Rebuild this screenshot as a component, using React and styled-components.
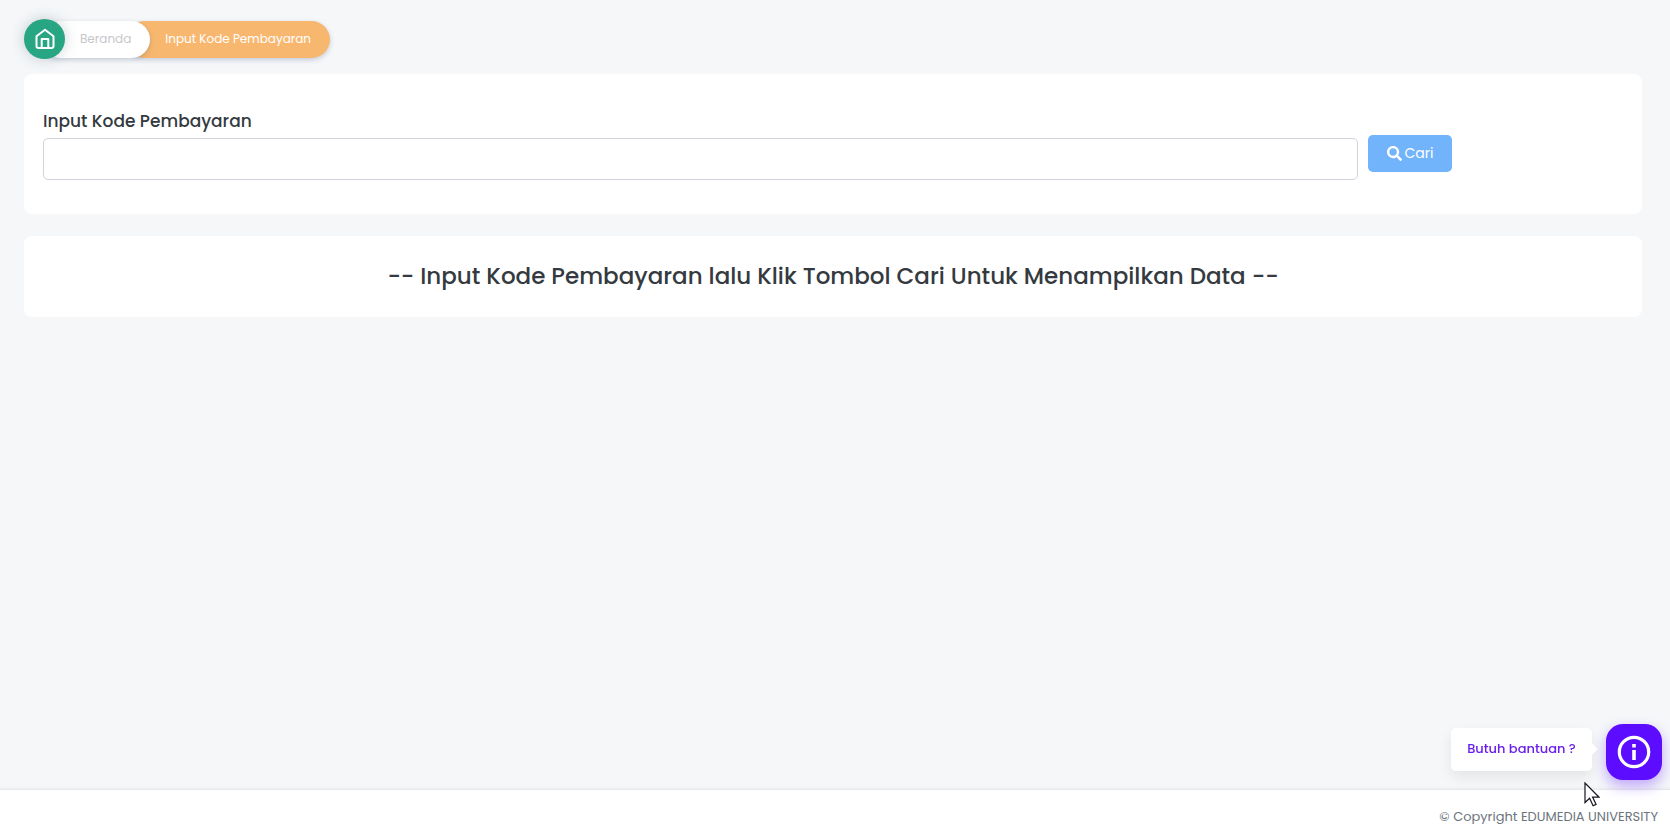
import React from 'react';
import styled, { createGlobalStyle } from 'styled-components';
import { FaSearch } from 'react-icons/fa';

const GlobalStyle = createGlobalStyle`
  *, *::before, *::after { box-sizing: border-box; }
  body {
    margin: 0;
    background: #f5f7f9;
    color: #343a40;
    font-family: Poppins, Inter, "Liberation Sans", sans-serif;
    font-size: 14px;
  }
`;

const Page = styled.div`
  display: flex;
  flex-direction: column;
  min-height: 100vh;
`;

const Main = styled.main`
  flex: 1;
  padding: 19px 28px 24px 24px;
`;

const Breadcrumb = styled.nav`
  display: flex;
  align-items: center;
  height: 40px;
  margin-bottom: 15px;
  isolation: isolate;
`;

const HomeLink = styled.a`
  z-index: 3;
  display: flex;
  align-items: center;
  justify-content: center;
  width: 41px;
  height: 40px;
  border-radius: 50%;
  background: #28a583;
  color: #fff;
  box-shadow: 0 0 14px rgba(50, 80, 90, 0.25);
`;

const Crumb = styled.a`
  z-index: ${(p) => p.$level};
  display: flex;
  align-items: center;
  height: 37px;
  margin-left: -24px;
  padding: 0 19px 0 39px;
  border-radius: 20px;
  background: ${(p) => (p.$active ? '#f8b76f' : '#fff')};
  color: ${(p) => (p.$active ? '#fff' : '#c6c8ca')};
  font-size: 12px;
  text-decoration: none;
  white-space: nowrap;
  box-shadow: 0 2px 5px rgba(60, 80, 120, 0.25);
`;

const Card = styled.section`
  margin-bottom: 22px;
  padding: ${(p) => p.$padding};
  border-radius: 8px;
  background: #fff;
`;

const SearchForm = styled.form`
  display: grid;
  grid-template-columns: minmax(0, 5fr) minmax(0, 1fr);
  column-gap: 2px;
`;

const Field = styled.div`
  display: flex;
  flex-direction: column;
`;

const Label = styled.label`
  margin-bottom: 4px;
  font-size: 17px;
  font-weight: 500;
  line-height: 26px;
`;

const TextInput = styled.input`
  width: 100%;
  height: 42px;
  padding: 8px 14px;
  border: 1px solid #ced4da;
  border-radius: 5px;
  background: #fff;
  color: inherit;
  font: inherit;
`;

const SearchButton = styled.button`
  display: flex;
  align-items: center;
  justify-content: center;
  gap: 3px;
  width: 84px;
  height: 37px;
  margin: 27px 0 0 8px;
  padding: 0 0 1px;
  border: 0;
  border-radius: 5px;
  background: #72b4fc;
  color: #fff;
  font: inherit;
`;

const Notice = styled.h1`
  margin: 0;
  font-size: 23px;
  font-weight: 500;
  line-height: 29px;
  text-align: center;
`;

const Footer = styled.footer`
  padding: 17px 12px 7px;
  border-top: 1px solid #e6eaec;
  background: #fff;
  color: #6c757d;
  font-size: 13px;
  line-height: 20px;
  text-align: right;
  box-shadow: 0 -1px 2px rgba(60, 80, 90, 0.06);
`;

const Help = styled.aside`
  position: fixed;
  right: 8px;
  bottom: 54px;
  display: flex;
  align-items: center;
  gap: 14px;
`;

const HelpText = styled.div`
  position: relative;
  margin-bottom: 5px;
  padding: 11px 14px 12px;
  width: 141px;
  border-radius: 5px;
  background: #fff;
  color: #6a1fee;
  font-size: 13px;
  font-weight: 500;
  line-height: 20px;
  text-align: center;
  white-space: nowrap;
  box-shadow: 0 6px 14px rgba(0, 0, 0, 0.08);

  &::after {
    content: '';
    position: absolute;
    top: 17px;
    right: -4px;
    width: 8px;
    height: 8px;
    background: #fff;
    transform: rotate(45deg);
  }
`;

const HelpButton = styled.button`
  display: flex;
  align-items: center;
  justify-content: center;
  width: 56px;
  height: 56px;
  padding: 0;
  border: 0;
  border-radius: 17px;
  background: #5c0cff;
  color: #fff;
  box-shadow: 0 6px 14px rgba(92, 12, 255, 0.35);
`;

const Pointer = styled.svg`
  position: fixed;
  right: 70px;
  bottom: 27px;
  pointer-events: none;
`;

function HomeIcon() {
  return (
    <svg width="20" height="22" viewBox="0 0 20 22" fill="none" stroke="currentColor" strokeWidth="2" strokeLinejoin="round" aria-hidden="true">
      <path d="M1.500 8.200 10 1.800l8.500 6.400V18a2 2 0 0 1-2 2h-13a2 2 0 0 1-2-2Z" />
      <path d="M6.700 20v-9h6.600v9" />
    </svg>
  );
}

function InfoIcon() {
  return (
    <svg width="34" height="34" viewBox="0 0 34 34" aria-hidden="true">
      <circle cx="17" cy="17" r="14.700" fill="none" stroke="currentColor" strokeWidth="3.200" />
      <path d="M15.200 9h3.600v3.400h-3.600zM15.200 15h3.600v10h-3.600z" fill="currentColor" />
    </svg>
  );
}

export default function App() {
  return (
    <Page>
      <GlobalStyle />
      <Main>
        <Breadcrumb aria-label="Breadcrumb">
          <HomeLink href="#" aria-label="Beranda">
            <HomeIcon />
          </HomeLink>
          <Crumb href="#" $level={2}>Beranda</Crumb>
          <Crumb href="#" $level={1} $active aria-current="page">Input Kode Pembayaran</Crumb>
        </Breadcrumb>

        <Card $padding="34px 19px">
          <SearchForm onSubmit={(e) => e.preventDefault()}>
            <Field>
              <Label htmlFor="kode">Input Kode Pembayaran</Label>
              <TextInput id="kode" type="text" />
            </Field>
            <SearchButton type="submit">
              <FaSearch size={15} aria-hidden="true" />
              Cari
            </SearchButton>
          </SearchForm>
        </Card>

        <Card $padding="26px 19px">
          <Notice>-- Input Kode Pembayaran lalu Klik Tombol Cari Untuk Menampilkan Data --</Notice>
        </Card>
      </Main>

      <Footer>© Copyright EDUMEDIA UNIVERSITY</Footer>

      <Help>
        <HelpText>Butuh bantuan ?</HelpText>
        <HelpButton type="button" aria-label="Butuh bantuan ?">
          <InfoIcon />
        </HelpButton>
      </Help>

      <Pointer width="16" height="25" viewBox="0 0 16 25" fill="#fff" stroke="#15151f" strokeWidth="1.200" aria-hidden="true">
        <path d="M1 1v19.500l4.600-4.300 3.500 7.600 3-1.400-3.500-7.300h6.300Z" />
      </Pointer>
    </Page>
  );
}
